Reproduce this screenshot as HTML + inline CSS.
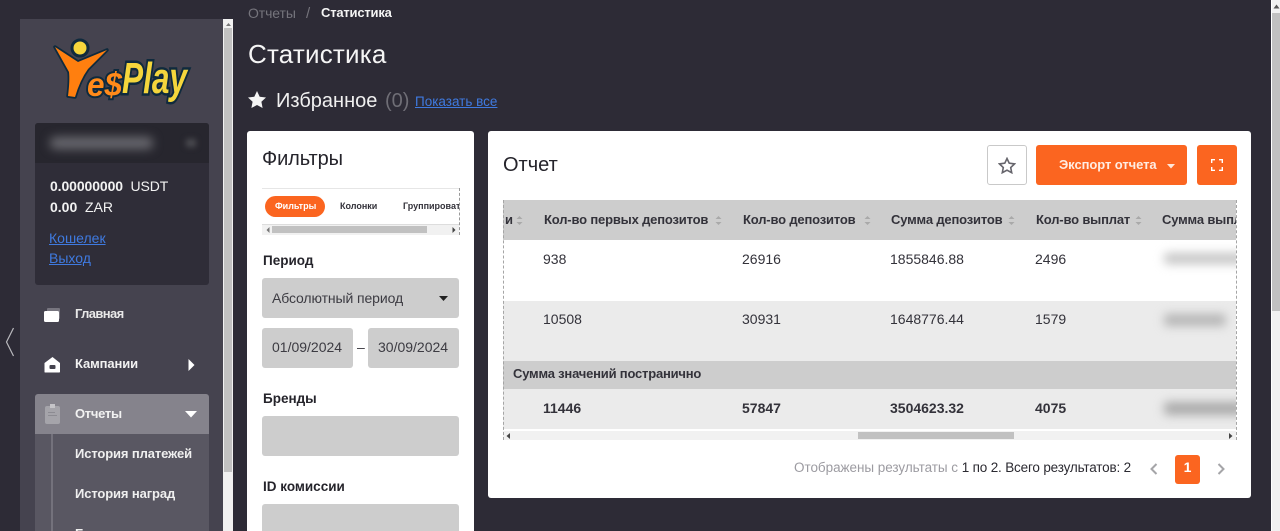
<!DOCTYPE html>
<html lang="ru"><head><meta charset="utf-8"><title>Статистика</title>
<style>
*{box-sizing:border-box}
html,body{margin:0;padding:0;width:1280px;height:531px;overflow:hidden;background:#2d2b36;font-family:"Liberation Sans",sans-serif}
#w{position:absolute;left:0;top:0;width:1280px;height:531px;overflow:hidden;background:#2d2b36}
.a{position:absolute;white-space:nowrap}
a{color:#3f7ae0;text-decoration:underline}
.b{font-weight:700}
.inp{position:absolute;background:#cdcdcd;border-radius:3px}
.th{position:absolute;top:212px;font-size:13px;font-weight:700;color:#33323a;white-space:nowrap;letter-spacing:-.17px}
.td{position:absolute;font-size:14px;color:#33323a;white-space:nowrap}
.sort{position:absolute;width:7px;height:11px}
.blur{position:absolute;background:#a9a9a9;filter:blur(5px);border-radius:4px}
.lbl{font-size:13.500px;color:#25242b;font-weight:700}
</style></head><body><div id="w">

<!-- sidebar -->
<div class="a" style="left:20px;top:19px;width:203px;height:512px;background:#45434f"></div>
<svg class="a" style="left:50px;top:34px" width="142" height="72" viewBox="0 0 142 72">
<path d="M5 13 L28 28 L57 16 L38 35 Q30 46 25 63 L18 62 Q20 46 19 38Z" fill="#ff7f0f" stroke="#0f2a3d" stroke-width="3.500" stroke-linejoin="round" paint-order="stroke"/>
<circle cx="30" cy="14" r="8" fill="#f5d63c" stroke="#0f2a3d" stroke-width="3"/>
<text x="37" y="62" font-family="Liberation Sans" font-weight="700" font-style="italic" font-size="33" fill="#ff8a1a" stroke="#0f2a3d" stroke-width="4" paint-order="stroke" textLength="35" lengthAdjust="spacingAndGlyphs">e$</text>
<text x="72" y="59" font-family="Liberation Sans" font-weight="700" font-style="italic" font-size="44" fill="#f5d63c" stroke="#0f2a3d" stroke-width="5" paint-order="stroke" textLength="65" lengthAdjust="spacingAndGlyphs">Play</text>
</svg>

<div class="a" style="left:35px;top:123px;width:174px;height:162px;background:#2f2d38;border-radius:3px"></div>
<div class="a" style="left:35px;top:123px;width:174px;height:40px;background:#27262e;border-radius:3px 3px 0 0"></div>
<div class="a" style="left:50px;top:137px;width:103px;height:12px;background:#6a6a70;filter:blur(5px);border-radius:5px"></div>
<div class="a" style="left:186px;top:139px;width:10px;height:8px;background:#4b4b50;filter:blur(3px)"></div>
<div class="a" style="left:50px;top:178px;font-size:14px;color:#f2f2f2;letter-spacing:-.1px"><span class="b">0.00000000</span>&nbsp; USDT</div>
<div class="a" style="left:50px;top:199px;font-size:14px;color:#f2f2f2"><span class="b">0.00</span>&nbsp; ZAR</div>
<a class="a" style="left:49px;top:230px;font-size:14px">Кошелек</a>
<a class="a" style="left:49px;top:250px;font-size:14px">Выход</a>

<svg class="a" style="left:44px;top:307px" width="18" height="16"><rect x="3" y="1" width="13" height="11" rx="1" fill="#77757f"/><rect x="0" y="4" width="15" height="11" rx="1.500" fill="#fff"/></svg>
<div class="a b" style="left:75px;top:306px;font-size:13px;color:#e8e8e8;letter-spacing:-.6px">Главная</div>
<svg class="a" style="left:44px;top:357px" width="17" height="16"><path d="M8.500 0 L16 6 V15 Q16 15.500 15 15.500 H1 Q0.500 15.500 0.500 15 V6Z" fill="#fff"/><rect x="5.500" y="8" width="6" height="4" rx="1" fill="#45434f"/></svg>
<div class="a b" style="left:75px;top:356px;font-size:13px;color:#f2f2f2;letter-spacing:-.1px">Кампании</div>
<svg class="a" style="left:188px;top:359px" width="7" height="12"><path d="M0.500 0 L6.500 6 L0.500 12Z" fill="#fff"/></svg>

<div class="a" style="left:35px;top:394px;width:174px;height:40px;background:#85838c;border-radius:3px 3px 0 0"></div>
<svg class="a" style="left:45px;top:404px" width="15" height="20"><rect y="2" width="15" height="18" rx="2" fill="#a5a4aa"/><rect x="5" y="0" width="5" height="4" fill="#c5c4c8"/><rect x="3" y="8" width="7" height="1" fill="#8c8b92"/><rect x="3" y="11" width="9" height="1" fill="#8c8b92"/></svg>
<div class="a b" style="left:75px;top:406px;font-size:13px;color:#f2f2f2;letter-spacing:-.3px">Отчеты</div>
<svg class="a" style="left:185px;top:411px" width="12" height="7"><path d="M0 0 H12 L6 6.500Z" fill="#fff"/></svg>
<div class="a" style="left:35px;top:434px;width:174px;height:97px;background:#595762"></div>
<div class="a" style="left:51px;top:434px;width:2px;height:97px;background:#74727c"></div>
<div class="a b" style="left:75px;top:446px;font-size:13px;color:#efefef;letter-spacing:-.12px">История платежей</div>
<div class="a b" style="left:75px;top:486px;font-size:13px;color:#efefef;letter-spacing:-.12px">История наград</div>
<div class="a b" style="left:75px;top:526px;font-size:13px;color:#efefef">Баланс</div>

<!-- sidebar scrollbar -->
<div class="a" style="left:223px;top:19px;width:10px;height:512px;background:#f1f1f1"></div>
<div class="a" style="left:224px;top:28px;width:8px;height:444px;background:#c1c1c1"></div>
<svg class="a" style="left:225px;top:22px" width="7" height="5"><path d="M3.500 1 L6 4 H1Z" fill="#777"/></svg>

<svg class="a" style="left:5px;top:327px" width="10" height="30"><path d="M8.500 1 L1.500 15 L8.500 29" fill="none" stroke="#b9b9bd" stroke-width="1.200"/></svg>

<!-- heading -->
<div class="a" style="left:248px;top:5px;font-size:14px;color:#75747c;letter-spacing:-.1px">Отчеты</div>
<div class="a" style="left:306px;top:5px;font-size:15px;color:#75747c">/</div>
<div class="a b" style="left:321px;top:5px;font-size:13px;color:#f4f4f4;letter-spacing:-.2px">Статистика</div>
<div class="a" style="left:248px;top:39px;font-size:26px;color:#f5f5f5;letter-spacing:.2px">Статистика</div>
<svg class="a" style="left:248px;top:91px" width="18" height="17"><path d="M9 0 L11.700 5.700 L18 6.500 L13.400 10.800 L14.600 17 L9 14 L3.400 17 L4.600 10.800 L0 6.500 L6.300 5.700Z" fill="#f5f5f5"/></svg>
<div class="a" style="left:276px;top:90px;font-size:20px;color:#f0f0f0">Избранное</div>
<div class="a" style="left:385px;top:90px;font-size:20px;color:#6f6e76">(0)</div>
<a class="a" style="left:415px;top:94px;font-size:13.500px">Показать все</a>

<!-- filter card -->
<div class="a" style="left:247px;top:131px;width:227px;height:400px;background:#fff;border-radius:3px 3px 0 0"></div>
<div class="a" style="left:262px;top:148px;font-size:20px;color:#25242b;letter-spacing:-.1px">Фильтры</div>
<div class="a" style="left:262px;top:188px;width:197px;height:1px;background:#e6e6e6"></div>
<div class="a" style="left:265px;top:196px;width:60px;height:21px;background:#fb6520;border-radius:11px"></div>
<div class="a b" style="left:275px;top:201px;font-size:9px;color:#fff">Фильтры</div>
<div class="a b" style="left:340px;top:201px;font-size:9px;color:#33323a">Колонки</div>
<div class="a b" style="left:403px;top:201px;width:56px;overflow:hidden;font-size:9px;color:#33323a">Группировать</div>
<div class="a" style="left:262px;top:224px;width:197px;height:1px;background:#ddd"></div>
<div class="a" style="left:262px;top:225px;width:197px;height:10px;background:#f1f1f1"></div>
<div class="a" style="left:272px;top:226px;width:155px;height:7px;background:#c1c1c1"></div>
<svg class="a" style="left:266px;top:227px" width="4" height="6"><path d="M3.500 0 V6 L0.500 3Z" fill="#777"/></svg>
<svg class="a" style="left:452px;top:227px" width="4" height="6"><path d="M0.500 0 V6 L3.500 3Z" fill="#444"/></svg>
<div class="a" style="left:459px;top:188px;height:47px;border-left:1px dashed #999"></div>
<div class="a lbl" style="left:263px;top:253px">Период</div>
<div class="inp" style="left:262px;top:278px;width:197px;height:40px"></div>
<div class="a" style="left:272px;top:290px;font-size:14px;color:#3c3b42;letter-spacing:-.1px">Абсолютный период</div>
<svg class="a" style="left:439px;top:296px" width="9" height="5"><path d="M0 0 H9 L4.500 5Z" fill="#222"/></svg>
<div class="inp" style="left:262px;top:328px;width:91px;height:40px"></div>
<div class="a" style="left:272px;top:339px;font-size:14px;color:#3c3b42">01/09/2024</div>
<div class="a" style="left:357px;top:339px;font-size:14px;color:#3c3b42">–</div>
<div class="inp" style="left:368px;top:328px;width:91px;height:40px"></div>
<div class="a" style="left:378px;top:339px;font-size:14px;color:#3c3b42">30/09/2024</div>
<div class="a lbl" style="left:263px;top:391px">Бренды</div>
<div class="inp" style="left:262px;top:416px;width:197px;height:40px"></div>
<div class="a lbl" style="left:263px;top:479px">ID комиссии</div>
<div class="inp" style="left:262px;top:504px;width:197px;height:40px"></div>

<!-- report card -->
<div class="a" style="left:488px;top:131px;width:763px;height:367px;background:#fff;border-radius:3px"></div>
<div class="a" style="left:503px;top:154px;font-size:20px;color:#25242b">Отчет</div>
<div class="a" style="left:987px;top:145px;width:40px;height:40px;border:1px solid #c9c9c9;border-radius:3px;background:#fff"></div>
<svg class="a" style="left:998px;top:157px" width="18" height="17"><path d="M9 1.500 L11.200 6.200 L16.500 6.900 L12.700 10.500 L13.700 15.700 L9 13.200 L4.300 15.700 L5.300 10.500 L1.500 6.900 L6.800 6.200Z" fill="none" stroke="#66656c" stroke-width="1.600"/></svg>
<div class="a" style="left:1036px;top:145px;width:151px;height:40px;background:#fb6520;border-radius:3px"></div>
<div class="a b" style="left:1059px;top:157px;font-size:13px;color:#ffece2;letter-spacing:-.07px">Экспорт отчета</div>
<svg class="a" style="left:1167px;top:164px" width="8" height="5"><path d="M0 0 H8 L4 4.500Z" fill="#ffe6d8"/></svg>
<div class="a" style="left:1197px;top:145px;width:40px;height:40px;background:#fb6520;border-radius:3px"></div>
<svg class="a" style="left:1211px;top:159px" width="12" height="12"><path d="M0.700 4 V0.700 H4 M8 0.700 H11.300 V4 M11.300 8 V11.300 H8 M4 11.300 H0.700 V8" fill="none" stroke="#fff" stroke-width="1.400"/></svg>

<!-- table -->
<div class="a" style="left:503px;top:200px;width:733px;height:40px;background:#cdcdcd"></div>
<div class="a" style="left:503px;top:301px;width:733px;height:60px;background:#ebebeb"></div>
<div class="a" style="left:503px;top:361px;width:733px;height:28px;background:#cdcdcd"></div>
<div class="a" style="left:503px;top:389px;width:733px;height:40px;background:#ebebeb"></div>
<div class="a" style="left:503px;top:431px;width:733px;height:9px;background:#f1f1f1"></div>
<div class="a" style="left:858px;top:432px;width:156px;height:7px;background:#c1c1c1"></div>
<svg class="a" style="left:506px;top:433px" width="5" height="6"><path d="M4 0 V6 L0.500 3Z" fill="#444"/></svg>
<svg class="a" style="left:1228px;top:433px" width="5" height="6"><path d="M1 0 V6 L4.500 3Z" fill="#444"/></svg>

<div class="th" style="left:505px">и</div>
<div class="th" style="left:544px">Кол-во первых депозитов</div>
<div class="th" style="left:743px">Кол-во депозитов</div>
<div class="th" style="left:891px">Сумма депозитов</div>
<div class="th" style="left:1036px">Кол-во выплат</div>
<div class="th" style="left:1162px;width:74px;overflow:hidden">Сумма выплат</div>
<svg class="sort" style="left:516px;top:215px"><path d="M3.500 1 L6.500 4 H0.500Z M3.500 10 L6.500 7 H0.500Z" fill="#a9a9a9"/></svg>
<svg class="sort" style="left:715px;top:215px"><path d="M3.500 1 L6.500 4 H0.500Z M3.500 10 L6.500 7 H0.500Z" fill="#a9a9a9"/></svg>
<svg class="sort" style="left:864px;top:215px"><path d="M3.500 1 L6.500 4 H0.500Z M3.500 10 L6.500 7 H0.500Z" fill="#a9a9a9"/></svg>
<svg class="sort" style="left:1008px;top:215px"><path d="M3.500 1 L6.500 4 H0.500Z M3.500 10 L6.500 7 H0.500Z" fill="#a9a9a9"/></svg>
<svg class="sort" style="left:1135px;top:215px"><path d="M3.500 1 L6.500 4 H0.500Z M3.500 10 L6.500 7 H0.500Z" fill="#a9a9a9"/></svg>

<div class="td" style="left:543px;top:251px">938</div>
<div class="td" style="left:742px;top:251px">26916</div>
<div class="td" style="left:890px;top:251px">1855846.88</div>
<div class="td" style="left:1035px;top:251px">2496</div>
<div class="td" style="left:543px;top:311px">10508</div>
<div class="td" style="left:742px;top:311px">30931</div>
<div class="td" style="left:890px;top:311px">1648776.44</div>
<div class="td" style="left:1035px;top:311px">1579</div>
<div class="td b" style="left:513px;top:366px;font-size:13px;letter-spacing:-.2px">Сумма значений постранично</div>
<div class="td b" style="left:543px;top:400px">11446</div>
<div class="td b" style="left:742px;top:400px">57847</div>
<div class="td b" style="left:890px;top:400px">3504623.32</div>
<div class="td b" style="left:1035px;top:400px">4075</div>
<div class="a" style="left:1140px;top:240px;width:96px;height:190px;overflow:hidden">
<div class="blur" style="left:24px;top:13px;width:80px;height:11px;background:#c4c4c4"></div>
<div class="blur" style="left:24px;top:74px;width:62px;height:12px;background:#b4b4b4"></div>
<div class="blur" style="left:24px;top:162px;width:80px;height:13px"></div>
</div>
<div class="a" style="left:503px;top:200px;height:240px;border-left:1px dashed #a5a5a5"></div>
<div class="a" style="left:1236px;top:200px;height:240px;border-left:1px dashed #a5a5a5"></div>

<!-- pagination -->
<div class="a" style="left:794px;top:460px;font-size:13.500px;color:#9c9ba1;letter-spacing:-.04px">Отображены результаты с <span style="color:#2b2a31;letter-spacing:-.17px">1 по 2. Всего результатов: 2</span></div>
<svg class="a" style="left:1150px;top:463px" width="8" height="12"><path d="M6.500 1 L1.500 6 L6.500 11" fill="none" stroke="#a5a5a8" stroke-width="2"/></svg>
<div class="a" style="left:1175px;top:455px;width:25px;height:29px;background:#fb6520;border-radius:3px"></div>
<div class="a b" style="left:1175px;top:459px;width:25px;text-align:center;font-size:14px;color:#fff">1</div>
<svg class="a" style="left:1217px;top:463px" width="8" height="12"><path d="M1.500 1 L6.500 6 L1.500 11" fill="none" stroke="#a5a5a8" stroke-width="2"/></svg>

<!-- page scrollbar -->
<div class="a" style="left:1271px;top:0;width:9px;height:531px;background:#f1f1f1;border-left:1px solid #fff"></div>
<div class="a" style="left:1272px;top:13px;width:8px;height:298px;background:#c1c1c1"></div>
<svg class="a" style="left:1273px;top:4px" width="7" height="5"><path d="M3.500 0.500 L6.500 4.500 H0.500Z" fill="#555"/></svg>
</div></body></html>
